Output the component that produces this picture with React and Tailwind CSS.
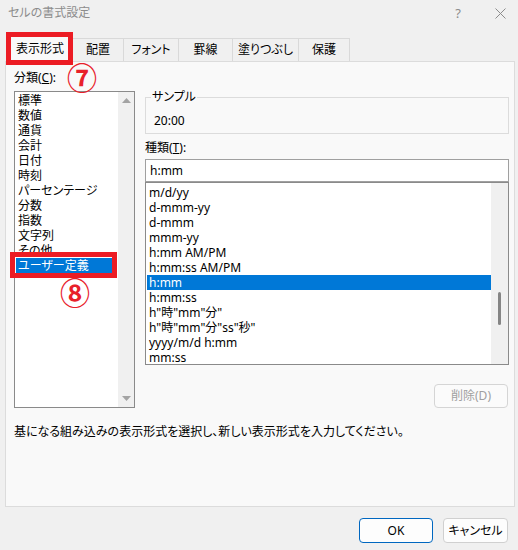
import React from 'react';

const categories = ['標準', '数値', '通貨', '会計', '日付', '時刻', 'パーセンテージ', '分数', '指数', '文字列', 'その他', 'ユーザー定義'];
const formats = ['m/d/yy', 'd-mmm-yy', 'd-mmm', 'mmm-yy', 'h:mm AM/PM', 'h:mm:ss AM/PM', 'h:mm', 'h:mm:ss', 'h"時"mm"分"', 'h"時"mm"分"ss"秒"', 'yyyy/m/d h:mm', 'mm:ss'];

const tabs = [
    { label: '配置', w: 'w-[51px]' },
    { label: 'フォント', w: 'w-[55px]' },
    { label: '罫線', w: 'w-[54px]' },
    { label: '塗りつぶし', w: 'w-[66px]' },
    { label: '保護', w: 'w-[51px]' },
];

const Arrow = ({ down }) => (
    <svg width="9" height="5" viewBox="0 0 9 5">
        <path d={down ? 'M0 0 L9 0 L4.5 5 Z' : 'M0 5 L9 5 L4.5 0 Z'} fill="#a3a3a3" />
    </svg>
);

const App = () => {
    return (
        <div className="relative w-[518px] h-[550px] bg-[#f0f0f0] text-[12px] text-black overflow-hidden [font-family:'Noto_Sans','Noto_Sans_CJK_JP',sans-serif] [font-feature-settings:'palt']">
            {/* title bar */}
            <div className="h-[26px] flex items-center justify-between pl-[8px] pr-[12px]">
                <span className="text-[#8c8c8c] leading-4">セルの書式設定</span>
                <div className="flex items-center gap-[34px]">
                    <span className="text-[#8c8c8c] text-[13px] leading-4">?</span>
                    <svg width="11" height="11" viewBox="0 0 11 11">
                        <path d="M0.5 0.5 L10.5 10.5 M10.5 0.5 L0.5 10.5" stroke="#8c8c8c" strokeWidth="1" />
                    </svg>
                </div>
            </div>

            {/* tabs */}
            <div className="mt-[8px] h-[27px] flex items-end pl-[7px]">
                <div className="relative z-10 w-[66px] h-[28px] -mb-px flex items-center justify-center bg-[#f9f9f9] border-t border-x border-[#dcdcdc]">
                    表示形式
                </div>
                {tabs.map((t) => (
                    <div key={t.label} className={`${t.w} h-[23px] flex items-center justify-center border-t border-r border-[#d9d9d9] bg-[#f0f0f0]`}>
                        {t.label}
                    </div>
                ))}
            </div>

            {/* panel */}
            <div className="mx-[5px] w-[510px] h-[446px] border border-[#dcdcdc] bg-[#f9f9f9] pt-[8px] pl-[8px] pr-[5px]">
                <div className="flex items-start">
                    {/* left column */}
                    <div className="w-[121px]">
                        <div className="leading-4 h-4">分類(<span className="underline">C</span>):</div>
                        <div className="mt-[5px] h-[317px] border border-[#8a8a8a] bg-white flex">
                            <div className="flex-1 pt-[1px] px-[1px]">
                                {categories.map((c) => (
                                    <div key={c} className={`h-[15px] leading-[15px] pl-[2px] whitespace-nowrap ${c === 'ユーザー定義' ? 'bg-[#0078d7] text-white' : ''}`}>
                                        {c}
                                    </div>
                                ))}
                            </div>
                            <div className="w-[16px] bg-[#f0f0f0] flex flex-col items-center justify-between py-[6px]">
                                <Arrow />
                                <Arrow down />
                            </div>
                        </div>
                    </div>

                    {/* right column */}
                    <div className="ml-[10px] w-[364px] pt-[19px] flex flex-col">
                        <fieldset className="border border-[#dcdcdc] pl-[8px] pb-[4px]">
                            <legend className="ml-[-3px] px-[1px] leading-4">サンプル</legend>
                            <div className="mt-[8px] leading-4">20:00</div>
                        </fieldset>
                        <div className="mt-[6px] leading-4">種類(<span className="underline">T</span>):</div>
                        <div className="mt-[3px] h-[23px] border border-[#a0a0a0] bg-white flex items-center pl-[4px]">h:mm</div>
                        <div className="h-[183px] border border-[#8a8a8a] bg-white flex">
                            <div className="flex-1 pt-[1.5px] pl-[1px]">
                                {formats.map((f) => (
                                    <div key={f} className={`h-[15px] leading-[15px] pl-[2px] whitespace-nowrap ${f === 'h:mm' ? 'bg-[#0078d7] text-white' : ''}`}>
                                        {f}
                                    </div>
                                ))}
                            </div>
                            <div className="w-[17px] bg-[#f0f0f0] flex flex-col items-center pt-[109px]">
                                <div className="w-[3px] h-[33px] rounded-full bg-[#858585]" />
                            </div>
                        </div>
                        <button className="mt-[19px] mr-px self-end w-[74px] h-[24px] rounded-[4px] border border-[#d5d5d5] bg-[#fbfbfb] text-[#a0a0a0] leading-4">
                            削除(D)
                        </button>
                    </div>
                </div>
                <div className="mt-[16px] leading-4">基になる組み込みの表示形式を選択し、新しい表示形式を入力してください。</div>
            </div>

            {/* buttons */}
            <div className="mt-[11px] flex justify-end gap-[10px] pr-[10px]">
                <button className="w-[74px] h-[25px] rounded-[4px] border-[1.5px] border-[#0067c0] bg-[#fdfdfd] leading-4">OK</button>
                <button className="w-[65px] h-[25px] rounded-[4px] border border-[#d0d0d0] bg-[#fdfdfd] leading-4">キャンセル</button>
            </div>

            {/* annotations */}
            <div className="absolute left-[6px] top-[32px] w-[67px] h-[33px] border-[5px] border-[#ec1c24] z-20" />
            <div className="absolute left-[10px] top-[252px] w-[107px] h-[26px] border-[5px] border-[#ec1c24] z-20" />
            <div className="absolute left-[68px] top-[63px] w-[28px] h-[30px] flex items-center justify-center text-[#e8202a] text-[30px] leading-[30px] font-bold z-20">⑦</div>
            <div className="absolute left-[61px] top-[278px] w-[28px] h-[30px] flex items-center justify-center text-[#e8202a] text-[30px] leading-[30px] font-bold z-20">⑧</div>
        </div>
    );
};

export default App;
